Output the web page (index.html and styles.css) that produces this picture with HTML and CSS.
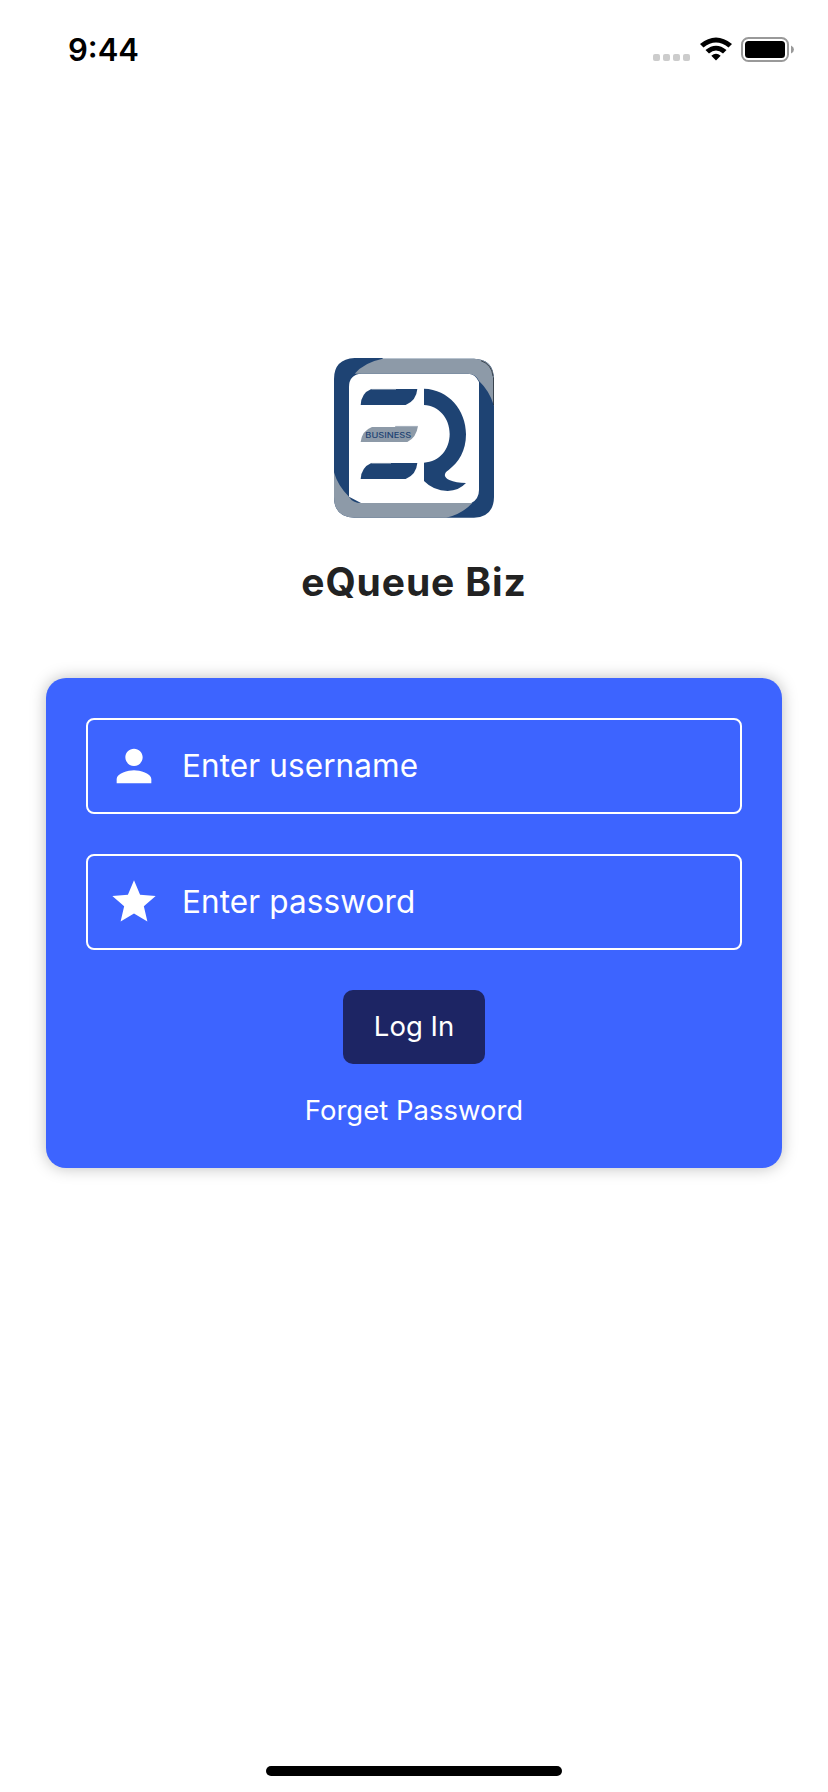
FILE: index.html
```html
<!DOCTYPE html>
<html lang="en">
<head>
<meta charset="utf-8">
<title>eQueue Biz</title>
<link rel="stylesheet" href="styles.css">
</head>
<body>
<div class="screen">
  <header class="status">
    <span class="time">9:44</span>
    <div class="indicators">
      <div class="signal"><i></i><i></i><i></i><i></i></div>
      <svg class="wifi" viewBox="0 0 32 24" aria-hidden="true">
        <path d="M0 7Q16-6 32 7L28.500 10.500Q16 .5 3.500 10.500ZM5.500 13Q16 4.500 26.500 13L23 16.500Q16 10.500 9 16.500ZM11.300 18.700Q16 14.700 20.700 18.700L16 23.500Z"/>
      </svg>
      <svg class="battery" viewBox="0 0 53 25" aria-hidden="true">
        <rect x="1" y="1" width="46" height="23" rx="6.500" fill="none" stroke="#999" stroke-width="2"/>
        <rect x="4" y="4" width="40" height="17" rx="3.500"/>
        <path d="M50 8.500Q53 10 53 12.500T50 16.500Z" fill="#999"/>
      </svg>
    </div>
  </header>
  <main class="login">
    <svg class="logo" viewBox="42 39 480 480" role="img" aria-label="eQueue Biz">
      <path fill="#1e4373" fill-rule="evenodd" d="M104 39H462Q522 41 522 104V456Q521 516 462 518H104Q42 517 42 456V102Q42 42 104 39ZM125 86Q87 88 87 126V455L123 474H454Q477 462 477 435V111Q466 86 443 86Z"/>
      <path fill="#fff" d="M188 38H523V100Q521 43 462 41H188Z"/>
      <path fill="#8d9aa8" d="M188 41H462Q522 43 522 104V182Q508 137 477 108Q467 86 443 86H104Q133 52 188 41ZM42 382Q54 424 87 455Q98 474 124 474H457Q425 508 379 518H104Q42 517 42 456Z"/>
      <path d="M483 47Q516 59 519 94M520.500 97V180" fill="none" stroke="#101820" stroke-width="2"/>
      <g fill="#1e4373">
        <path d="M154 132H292Q289 167 257 180H122Q124 144 154 132Z"/>
        <path d="M154 354H292Q289 389 257 402H122Q124 367 154 354Z"/>
        <path d="M312 131C386 133 438 196 438 268C438 318 416 352 386 375C370 385 371 397 388 405Q408 414 438 414Q417 437 383 438Q340 437 312 408V353C359 350 389 313 389 267C389 219 356 182 312 180Z"/>
      </g>
      <path fill="#8d9aa8" d="M156 246H226V243H294Q289 278 262 291H122Q126 257 156 246Z"/>
      <path d="M154 133H228M154 355H213M226 244H294" stroke="#b9c3ce" stroke-width="2"/>
      <text class="logo-text" x="136" y="278" textLength="138" lengthAdjust="spacingAndGlyphs">BUSINESS</text>
    </svg>
    <h1 class="title">eQueue Biz</h1>
    <form class="card">
      <label class="field">
        <svg class="icon" viewBox="0 0 24 24" aria-hidden="true"><path d="M12 12c2.210 0 4-1.790 4-4s-1.790-4-4-4-4 1.790-4 4 1.790 4 4 4zm0 2c-2.670 0-8 1.340-8 4v2h16v-2c0-2.660-5.330-4-8-4z"/></svg>
        <span class="hint">Enter username</span>
      </label>
      <label class="field">
        <svg class="icon" viewBox="0 0 24 24" aria-hidden="true"><path d="M12 17.270L18.180 21l-1.640-7.030L22 9.240l-7.190-.61L12 2 9.190 8.630 2 9.240l5.460 4.730L5.820 21z"/></svg>
        <span class="hint">Enter password</span>
      </label>
      <button class="submit" type="button">Log In</button>
      <a class="forgot">Forget Password</a>
    </form>
  </main>
  <footer class="home"><div class="bar"></div></footer>
</div>
</body>
</html>
```
FILE: styles.css
```css
body {
  margin: 0;
  background: #fff;
  font-family: Inter, "Liberation Sans", sans-serif;
}
.screen {
  display: flex;
  flex-direction: column;
  width: 828px;
  height: 1792px;
}
.status {
  display: flex;
  justify-content: space-between;
  box-sizing: border-box;
  height: 88px;
  padding: 37px 34px 0 68px;
}
.time {
  font-size: 31px;
  font-weight: 600;
  line-height: 25px;
}
.indicators { display: flex; }
.signal {
  display: flex;
  gap: 3px;
  margin: 17px 10px 0 0;
}
.signal i {
  width: 7px;
  height: 7px;
  border-radius: 2px;
  background: #ccc;
}
.wifi {
  width: 32px;
  height: 24px;
  margin-right: 9px;
}
.battery {
  width: 53px;
  height: 25px;
}
.login {
  display: flex;
  flex: 1;
  flex-direction: column;
  align-items: center;
  padding: 270px 46px 0;
}
.logo {
  width: 160px;
  height: 160px;
}
.logo-text {
  fill: #1e4373;
  font-size: 21px;
  font-weight: 500;
}
.title {
  margin: 40px 0 0;
  color: #222;
  font-size: 39px;
  font-weight: 700;
  letter-spacing: .9px;
  line-height: 48px;
  white-space: nowrap;
}
.card {
  display: flex;
  flex-direction: column;
  align-items: center;
  box-sizing: border-box;
  width: 736px;
  height: 490px;
  margin-top: 72.400px;
  padding: 40px;
  border-radius: 20px;
  background: #3d64ff;
  box-shadow: 0 0 16px rgba(0, 0, 0, .26);
  color: #fff;
}
.field {
  display: flex;
  align-items: center;
  box-sizing: border-box;
  width: 656px;
  height: 96px;
  margin-bottom: 40px;
  padding-left: 20px;
  border: 2px solid #fff;
  border-radius: 8px;
}
.icon {
  width: 52px;
  height: 52px;
  margin-right: 22px;
  fill: #fff;
}
.hint {
  font-size: 31.500px;
  letter-spacing: .1px;
  line-height: 40px;
  white-space: nowrap;
}
.submit {
  width: 142px;
  height: 74px;
  padding: 0 0 2px;
  border: 0;
  border-radius: 10px;
  background: #1d2564;
  color: #fff;
  font: 400 27.500px/72px Inter, "Liberation Sans", sans-serif;
}
.forgot {
  margin-top: 28px;
  font-size: 27.500px;
  line-height: 36px;
}
.home {
  display: flex;
  justify-content: center;
  height: 26px;
}
.bar {
  width: 296px;
  height: 10px;
  border-radius: 5px;
  background: #000;
}
```
